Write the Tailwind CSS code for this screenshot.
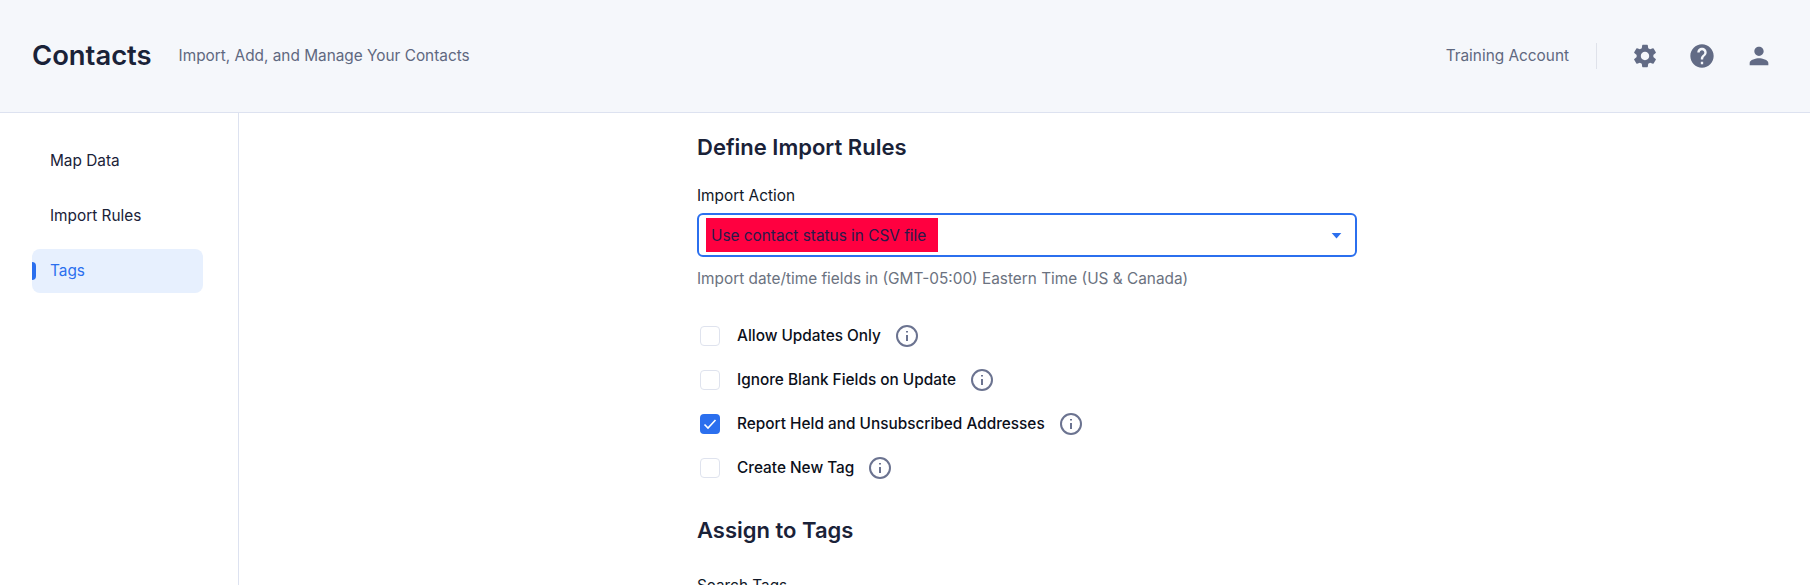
<!DOCTYPE html>
<html lang="en">
<head>
  <meta charset="UTF-8" />
  <title>Contacts</title>
  <script src="https://cdn.jsdelivr.net/npm/@tailwindcss/browser@4"></script>
</head>
<body class="bg-white text-[#1a2238] font-['Inter',sans-serif] h-[585px] overflow-hidden">
  <header class="h-[113px] bg-[#f5f7fb] border-b border-[#dde2f0] pl-8 pr-[37px] flex items-center justify-between">
    <div class="flex items-center">
      <h1 class="text-[27.4px] font-semibold text-[#1a2238] mr-[27px]">Contacts</h1>
      <p class="text-[15.36px] text-[#5f6880]">Import, Add, and Manage Your Contacts</p>
    </div>
    <div class="flex items-center">
      <span class="text-[15.36px] text-[#5f6880]">Training Account</span>
      <div class="w-px h-[26px] bg-[#dfe2ea] ml-[27px] mr-[34px]"></div>
      <div class="flex items-center gap-[29px] text-[#626b85]">
        <svg class="w-[28px] h-[28px]" viewBox="0 0 24 24" fill="currentColor"><path d="M19.14 12.94c.04-.3.06-.61.06-.94 0-.32-.02-.64-.07-.94l2.03-1.58a.49.49 0 0 0 .12-.61l-1.92-3.32a.49.49 0 0 0-.59-.22l-2.39.96c-.5-.38-1.03-.7-1.62-.94l-.36-2.54a.48.48 0 0 0-.48-.41h-3.84c-.24 0-.43.17-.47.41l-.36 2.54c-.59.24-1.13.57-1.62.94l-2.39-.96c-.22-.08-.47 0-.59.22L2.74 8.87c-.12.21-.08.47.12.61l2.03 1.58c-.05.3-.09.63-.09.94s.02.64.07.94l-2.03 1.58a.49.49 0 0 0-.12.61l1.92 3.32c.12.22.37.29.59.22l2.39-.96c.5.38 1.03.7 1.62.94l.36 2.54c.05.24.24.41.48.41h3.84c.24 0 .44-.17.47-.41l.36-2.54c.59-.24 1.13-.56 1.62-.94l2.39.96c.22.08.47 0 .59-.22l1.92-3.32c.12-.22.07-.47-.12-.61l-2.01-1.58zM12 15.6c-1.98 0-3.6-1.62-3.6-3.6s1.62-3.6 3.6-3.6 3.6 1.62 3.6 3.6-1.62 3.6-3.6 3.6z"/></svg>
        <svg class="w-[28px] h-[28px]" viewBox="0 0 24 24" fill="currentColor"><path d="M12 2C6.48 2 2 6.48 2 12s4.48 10 10 10 10-4.48 10-10S17.52 2 12 2zm1 17h-2v-2h2v2zm2.07-7.75-.9.92C13.45 12.9 13 13.5 13 15h-2v-.5c0-1.1.45-2.1 1.17-2.83l1.24-1.26c.37-.36.59-.86.59-1.41 0-1.1-.9-2-2-2s-2 .9-2 2H8c0-2.21 1.79-4 4-4s4 1.79 4 4c0 .88-.36 1.68-.93 2.25z"/></svg>
        <svg class="w-[28px] h-[28px]" viewBox="0 0 24 24" fill="currentColor"><path d="M12 12c2.21 0 4-1.79 4-4s-1.79-4-4-4-4 1.79-4 4 1.79 4 4 4zm0 2c-2.67 0-8 1.34-8 4v2h16v-2c0-2.66-5.33-4-8-4z"/></svg>
      </div>
    </div>
  </header>

  <div class="flex h-[472px]">
    <nav class="w-[239px] shrink-0 border-r border-[#dde2f0] pl-8 pr-[35px] pt-[26px] flex flex-col gap-[11px] text-[15.36px]">
      <a class="h-[44px] flex items-center pl-[18px] text-[#1a2238]">Map Data</a>
      <a class="h-[44px] flex items-center pl-[18px] text-[#1a2238]">Import Rules</a>
      <a class="relative h-[44px] flex items-center pl-[18px] rounded-lg bg-[#e7f0fe] text-[#2b6fee]">
        <span class="absolute left-0 top-[13px] w-[4px] h-[18px] rounded-r bg-[#2b6fee]"></span>
        Tags
      </a>
    </nav>

    <main class="flex-1 pl-[458px]">
      <div class="w-[660px]">
        <h2 class="text-[22px] leading-[28px] font-semibold text-[#1a2238] pt-[20px]">Define Import Rules</h2>
        <label class="block text-[15.36px] leading-5 text-[#111827] mt-[25px]">Import Action</label>
        <div class="mt-[7px] h-[44px] border-2 border-[#2b6fee] rounded-md flex items-center justify-between pl-[7px] pr-[13px]">
          <span class="bg-[#ff0040] h-[34px] w-[232px] flex items-center pl-[5px] pt-[2px] text-[15.36px] text-[#2a1a4a]">Use contact status in CSV file</span>
          <svg class="w-[11px] h-[7px] text-[#2b6fee]" viewBox="0 0 12 8" fill="currentColor"><path d="M0.5 1h11L6 7.5z"/></svg>
        </div>
        <p class="text-[15.36px] leading-5 text-[#6b7280] mt-[12px]">Import date/time fields in (GMT-05:00) Eastern Time (US &amp; Canada)</p>

        <ul class="mt-[35px] flex flex-col gap-[20px] text-[15.36px] font-medium text-[#0b0f1a] pl-[3px]">
          <li class="h-[24px] flex items-center">
            <span class="w-[20px] h-[20px] rounded border border-[#dfe3ee] bg-white"></span>
            <span class="ml-[17px]">Allow Updates Only</span>
            <svg class="w-[24px] h-[24px] ml-[14px] text-[#6b7390]" viewBox="0 0 24 24" fill="none" stroke="currentColor" stroke-width="2"><circle cx="12" cy="12" r="10"/><path d="M12 11v6M12 7v1.6"/></svg>
          </li>
          <li class="h-[24px] flex items-center">
            <span class="w-[20px] h-[20px] rounded border border-[#dfe3ee] bg-white"></span>
            <span class="ml-[17px]">Ignore Blank Fields on Update</span>
            <svg class="w-[24px] h-[24px] ml-[14px] text-[#6b7390]" viewBox="0 0 24 24" fill="none" stroke="currentColor" stroke-width="2"><circle cx="12" cy="12" r="10"/><path d="M12 11v6M12 7v1.6"/></svg>
          </li>
          <li class="h-[24px] flex items-center">
            <span class="w-[20px] h-[20px] rounded bg-[#2b6fee] flex items-center justify-center">
              <svg class="w-[14px] h-[14px] text-white" viewBox="0 0 14 14" fill="none" stroke="currentColor" stroke-width="1.6"><path d="M1.5 7.5l3.5 3.5 7.5-8"/></svg>
            </span>
            <span class="ml-[17px]">Report Held and Unsubscribed Addresses</span>
            <svg class="w-[24px] h-[24px] ml-[14px] text-[#6b7390]" viewBox="0 0 24 24" fill="none" stroke="currentColor" stroke-width="2"><circle cx="12" cy="12" r="10"/><path d="M12 11v6M12 7v1.6"/></svg>
          </li>
          <li class="h-[24px] flex items-center">
            <span class="w-[20px] h-[20px] rounded border border-[#dfe3ee] bg-white"></span>
            <span class="ml-[17px]">Create New Tag</span>
            <svg class="w-[24px] h-[24px] ml-[14px] text-[#6b7390]" viewBox="0 0 24 24" fill="none" stroke="currentColor" stroke-width="2"><circle cx="12" cy="12" r="10"/><path d="M12 11v6M12 7v1.6"/></svg>
          </li>
        </ul>

        <h2 class="text-[22px] leading-[28px] font-semibold text-[#1a2238] mt-[36px]">Assign to Tags</h2>
        <label class="block text-[15.36px] leading-5 text-[#111827] mt-[32px]">Search Tags</label>
      </div>
    </main>
  </div>
</body>
</html>
